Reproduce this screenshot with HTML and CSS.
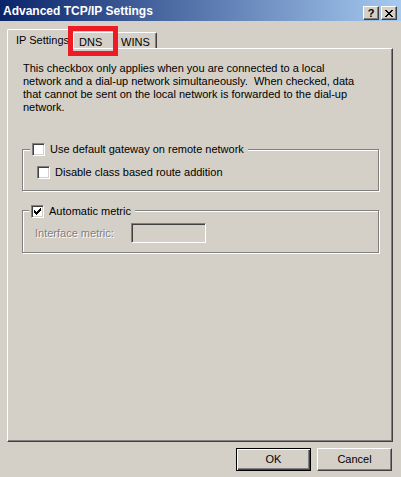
FILE: index.html
```html
<!DOCTYPE html>
<html>
<head>
<meta charset="utf-8">
<link rel="stylesheet" href="styles.css">
</head>
<body>
<div class="window">
  <div class="titlebar">
    <span class="title">Advanced TCP/IP Settings</span>
    <div class="tbtns">
      <span class="tbtn help">?</span>
      <span class="tbtn close"><svg width="8" height="7" viewBox="0 0 8 7" shape-rendering="crispEdges"><path d="M0 0h2v1H0zM6 0h2v1H6zM1 1h2v1H1zM5 1h2v1H5zM2 2h4v1H2zM3 3h2v1H3zM2 4h4v1H2zM1 5h2v1H1zM5 5h2v1H5zM0 6h2v1H0zM6 6h2v1H6z" fill="#000"/></svg></span>
    </div>
  </div>
  <div class="body">
    <div class="tabs">
      <div class="tab active">IP Settings</div>
      <div class="tab dns">DNS<span class="highlight"></span></div>
      <div class="tab wins">WINS</div>
    </div>
    <div class="panel">
      <p class="info">This checkbox only applies when you are connected to a local<br>network and a dial-up network simultaneously.&nbsp; When checked, data<br>that cannot be sent on the local network is forwarded to the dial-up<br>network.</p>
      <div class="group g1">
        <div class="ghead"><span class="cb"></span><span class="lbl">Use default gateway on remote network</span></div>
        <div class="row sub"><span class="cb"></span><span class="lbl">Disable class based route addition</span></div>
      </div>
      <div class="group g2">
        <div class="ghead h2"><span class="cb"><svg width="7" height="7" viewBox="0 0 7 7" shape-rendering="crispEdges"><path d="M0 2h1v3H0zM1 3h1v3H1zM2 4h1v3H2zM3 3h1v3H3zM4 2h1v3H4zM5 1h1v3H5zM6 0h1v3H6z" fill="#000"/></svg></span><span class="lbl">Automatic metric</span></div>
        <div class="row metric"><span class="disabled">Interface metric:</span><span class="input"></span></div>
      </div>
    </div>
    <div class="buttons">
      <button class="btn default"><span class="btn-in">OK</span></button>
      <button class="btn"><span class="btn-in">Cancel</span></button>
    </div>
  </div>
</div>
</body>
</html>
```
FILE: styles.css
```css
html, body {
  margin: 0;
  padding: 0;
  background: #d4d0c8;
}
.window {
  width: 401px;
  height: 477px;
  background: #d4d0c8;
  font-family: "Liberation Sans", Arial, sans-serif;
  font-size: 11px;
  color: #000;
  overflow: hidden;
}
.titlebar {
  height: 21px;
  box-sizing: border-box;
  background: linear-gradient(to right, #0a246a 0%, #a6caf0 100%);
  display: flex;
  justify-content: space-between;
  align-items: flex-start;
  padding: 0 4px 0 3px;
}
.title {
  color: #fff;
  font-weight: bold;
  font-size: 12px;
  line-height: 14px;
  padding-top: 4px;
}
.tbtns {
  display: flex;
  gap: 2px;
  padding-top: 6px;
}
.tbtn {
  width: 16px;
  height: 14px;
  box-sizing: border-box;
  background: #d4d0c8;
  border: 1px solid;
  border-color: #fff #404040 #404040 #fff;
  box-shadow: inset -1px -1px 0 #808080;
  display: flex;
  align-items: center;
  justify-content: center;
  font-weight: bold;
  font-size: 11px;
  line-height: 12px;
}
.tbtn.help { padding-bottom: 1px; }
.body {
  padding: 8px 8px 0 7px;
}
.tabs {
  display: flex;
  align-items: flex-end;
  height: 19px;
}
.tab {
  box-sizing: border-box;
  height: 16px;
  border-top: 1px solid #fff;
  border-left: 1px solid #fff;
  border-right: 1px solid #404040;
  box-shadow: inset -1px 0 0 #808080;
  border-radius: 2px 2px 0 0;
  padding: 3px 0 0 5px;
  line-height: 13px;
  position: relative;
}
.tab.active {
  height: 20px;
  width: 66px;
  margin-bottom: -1px;
  padding: 4px 0 0 8px;
  background: #d4d0c8;
  z-index: 1;
}
.tab.dns { width: 43px; padding-left: 5px; }
.tab.wins { width: 41px; padding-left: 4px; }
.highlight {
  position: absolute;
  left: -6px;
  top: -7px;
  width: 50px;
  height: 30px;
  box-sizing: border-box;
  border: 5px solid #ed1c24;
  z-index: 2;
}
.panel {
  box-sizing: border-box;
  width: 386px;
  height: 394px;
  border-top: 1px solid #fff;
  border-left: 1px solid #fff;
  border-right: 1px solid #404040;
  border-bottom: 1px solid #404040;
  box-shadow: inset -1px -1px 0 #808080;
  padding: 13px 0 0 15px;
}
.info {
  margin: 0;
  line-height: 13px;
}
.group {
  margin-left: -1px;
  width: 357px;
  box-sizing: border-box;
  border: 1px solid #808080;
  box-shadow: inset 1px 1px 0 #fff, 1px 1px 0 #fff;
}
.g1 {
  margin-top: 35px;
  height: 42px;
}
.g2 {
  margin-top: 19px;
  height: 43px;
}
.ghead {
  display: flex;
  align-items: center;
  width: fit-content;
  background: #d4d0c8;
  margin: -7px 0 0 7px;
  padding: 0 4px 0 2px;
  height: 13px;
  line-height: 13px;
}
.ghead.h2 {
  margin-left: 6px;
  margin-top: -6px;
}
.lbl { margin-left: 5px; }
.cb {
  width: 13px;
  height: 13px;
  box-sizing: border-box;
  flex: none;
  background: #fff;
  border: 1px solid;
  border-color: #808080 #fff #fff #808080;
  box-shadow: inset 1px 1px 0 #404040, inset -1px -1px 0 #d4d0c8;
  display: flex;
  align-items: center;
  justify-content: center;
}
.cb svg { display: block; }
.row {
  display: flex;
  align-items: center;
  line-height: 13px;
}
.row.sub {
  margin: 10px 0 0 14px;
}
.row.metric {
  margin: 5px 0 0 12px;
}
.disabled {
  width: 96px;
  color: #808080;
  text-shadow: 1px 1px 0 #fff;
}
.input {
  width: 75px;
  height: 20px;
  box-sizing: border-box;
  border: 1px solid;
  border-color: #808080 #fff #fff #808080;
  box-shadow: inset 1px 1px 0 #404040, inset -1px -1px 0 #d4d0c8;
  background: #d4d0c8;
}
.buttons {
  display: flex;
  justify-content: flex-end;
  gap: 6px;
  margin-top: 6px;
  padding-right: 1px;
}
.btn {
  width: 75px;
  height: 23px;
  box-sizing: border-box;
  margin: 0;
  padding: 0;
  font: inherit;
  color: #000;
  background: #d4d0c8;
  border: 1px solid;
  border-color: #fff #404040 #404040 #fff;
  box-shadow: inset -1px -1px 0 #808080;
  display: flex;
  align-items: center;
  justify-content: center;
}
.btn.default {
  border: 1px solid #000;
  box-shadow: inset 1px 1px 0 #fff, inset -1px -1px 0 #404040, inset -2px -2px 0 #808080;
}
.btn-in { line-height: 13px; }
```
